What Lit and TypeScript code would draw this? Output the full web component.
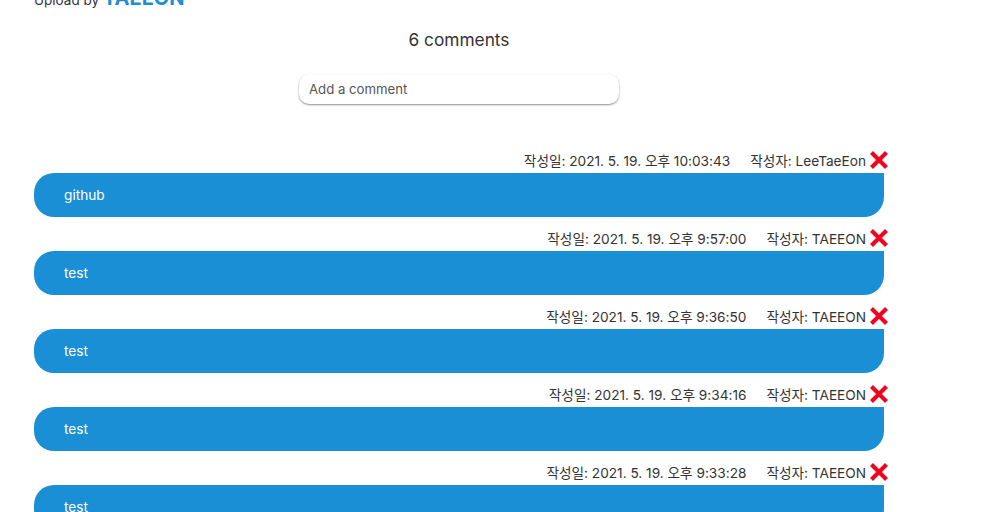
import { html, css, LitElement } from "lit";
import { customElement } from "lit/decorators.js";

const comments = [
  { date: "2021. 5. 19. 오후 10:03:43", author: "LeeTaeEon", text: "github" },
  { date: "2021. 5. 19. 오후 9:57:00", author: "TAEEON", text: "test" },
  { date: "2021. 5. 19. 오후 9:36:50", author: "TAEEON", text: "test" },
  { date: "2021. 5. 19. 오후 9:34:16", author: "TAEEON", text: "test" },
  { date: "2021. 5. 19. 오후 9:33:28", author: "TAEEON", text: "test" },
];

@customElement("app-root")
export class AppRoot extends LitElement {
  static styles = css`
    :host {
      display: block;
      height: 512px;
      overflow: hidden;
      background: #fff;
      font-family: Inter, "Noto Sans CJK KR", sans-serif;
      color: #333;
    }

    .page {
      width: 850px;
      margin: -13px 0 0 34px;
    }

    .upload {
      display: flex;
      align-items: baseline;
      gap: 4px;
      height: 22px;
      font-size: 13.5px;
      line-height: 22px;
    }

    .upload b {
      color: #1a8fd6;
      font-size: 20px;
      font-weight: 700;
    }

    .title {
      margin-top: 19px;
      text-align: center;
      font-size: 17.3px;
      line-height: 24px;
      font-weight: 400;
      color: #333;
    }

    .add {
      box-sizing: border-box;
      width: 320px;
      height: 30px;
      margin: 22px 0 0 265px;
      padding-left: 10px;
      border-radius: 10px;
      box-shadow: 0 1px 2px 0 rgba(0, 0, 0, 0.45);
      font-size: 13.2px;
      line-height: 30px;
      color: #555;
    }

    .list {
      margin-top: 47px;
      display: flex;
      flex-direction: column;
      gap: 12px;
    }

    .meta {
      box-sizing: border-box;
      display: flex;
      justify-content: flex-end;
      align-items: center;
      height: 22px;
      padding-bottom: 4px;
      font-size: 13.65px;
      color: #333;
      margin-right: -4px;
      white-space: nowrap;
    }

    .meta .date {
      margin-right: 20px;
    }

    .meta svg {
      width: 18px;
      height: 18px;
      margin: 0 0 0 4px;
      flex: none;
    }

    .bubble {
      box-sizing: border-box;
      height: 44px;
      padding-left: 30px;
      border-radius: 20px 0 20px 20px;
      background: #1a8fd6;
      color: #fff;
      font-size: 13.7px;
      line-height: 44px;
    }
  `;

  render() {
    return html`
      <div class="page">
        <div class="upload">Upload by <b>TAEEON</b></div>
        <div class="title">6 comments</div>
        <div class="add">Add a comment</div>
        <div class="list">
          ${comments.map(
            (c) => html`
              <div>
                <div class="meta">
                  <span class="date">작성일: ${c.date}</span>
                  <span>작성자: ${c.author}</span>
                  <svg viewBox="0 0 18 18">
                    <path d="M1.5 1.5 L16.5 16.5 M16.5 1.5 L1.5 16.5" stroke="#ee0520" stroke-width="4.2" fill="none" />
                  </svg>
                </div>
                <div class="bubble">${c.text}</div>
              </div>
            `
          )}
        </div>
      </div>
    `;
  }
}
